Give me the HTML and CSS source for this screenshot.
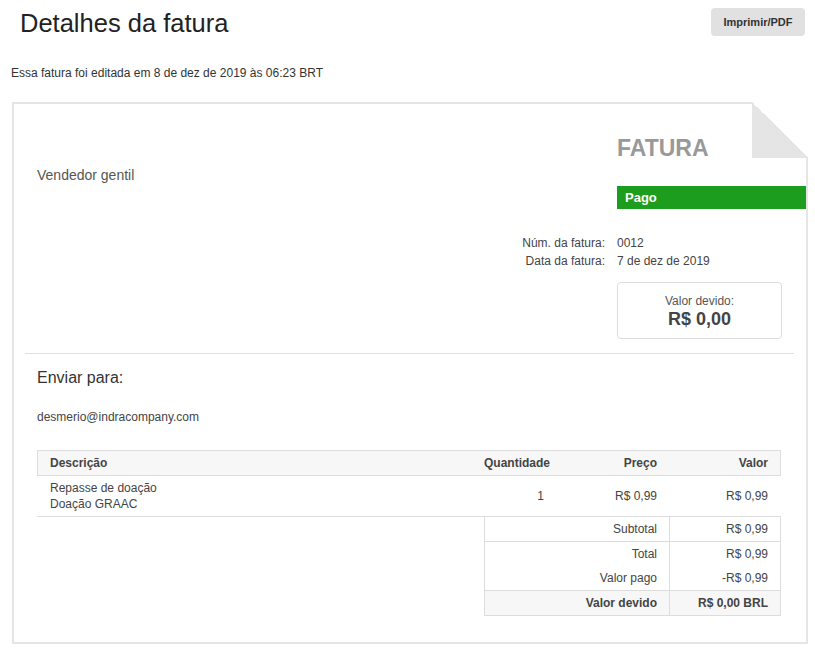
FILE: index.html
```html
<!DOCTYPE html>
<html lang="pt-BR">
<head>
<meta charset="utf-8">
<title>Detalhes da fatura</title>
<link rel="stylesheet" href="styles.css">
</head>
<body>
<div class="page">
  <header class="top">
    <h1 class="title">Detalhes da fatura</h1>
    <button class="print-btn" type="button">Imprimir/PDF</button>
  </header>
  <p class="edited">Essa fatura foi editada em 8 de dez de 2019 às 06:23 BRT</p>

  <div class="invoice">
    <div class="head-grid">
      <div class="seller">Vendedor gentil</div>
      <div class="doc-title">FATURA</div>
      <div class="status">Pago</div>
      <div class="meta-label r3">Núm. da fatura:</div>
      <div class="meta-value r3">0012</div>
      <div class="meta-label r4">Data da fatura:</div>
      <div class="meta-value r4">7 de dez de 2019</div>
      <div class="due-box">
        <div class="due-label">Valor devido:</div>
        <div class="due-amount">R$ 0,00</div>
      </div>
    </div>

    <hr class="divider">

    <div class="body">
      <h2 class="ship-title">Enviar para:</h2>
      <p class="email">desmerio@indracompany.com</p>

      <div class="items">
        <div class="row row-head">
          <div class="c-desc">Descrição</div>
          <div class="c-num">Quantidade</div>
          <div class="c-num">Preço</div>
          <div class="c-num">Valor</div>
        </div>
        <div class="row row-item">
          <div class="c-desc">Repasse de doação<br>Doação GRAAC</div>
          <div class="c-num c-qty">1</div>
          <div class="c-num">R$ 0,99</div>
          <div class="c-num">R$ 0,99</div>
        </div>
      </div>

      <div class="totals">
        <div class="t-label sep">Subtotal</div>
        <div class="t-value sep">R$ 0,99</div>
        <div class="t-label">Total</div>
        <div class="t-value">R$ 0,99</div>
        <div class="t-label sep">Valor pago</div>
        <div class="t-value sep">-R$ 0,99</div>
        <div class="t-label strong">Valor devido</div>
        <div class="t-value strong">R$ 0,00 BRL</div>
      </div>
    </div>
  </div>
</div>
</body>
</html>
```

FILE: styles.css
```css
* {
  box-sizing: border-box;
}

html, body {
  margin: 0;
  padding: 0;
  background: #fff;
}

body {
  font-family: "Liberation Sans", Arial, sans-serif;
  color: #333;
  font-size: 12px;
}

.page {
  padding-top: 8px;
}

.top {
  display: flex;
  justify-content: space-between;
  align-items: flex-start;
  padding: 0 10px 0 20px;
}

.title {
  margin: 0;
  font-size: 25.5px;
  line-height: 30px;
  font-weight: normal;
  color: #222;
}

.print-btn {
  width: 94px;
  height: 28px;
  border: none;
  border-radius: 4px;
  background: #e1e1e1;
  color: #333;
  font-family: inherit;
  font-size: 11px;
  font-weight: bold;
  padding: 0;
}

.edited {
  margin: 27px 0 0 11px;
  font-size: 12px;
  line-height: 16px;
  color: #333;
}

.invoice {
  position: relative;
  margin: 21px 0 0 12px;
  width: 796px;
  border: 2px solid #e5e5e5;
  padding: 30px 0 26px;
}

.invoice::before {
  content: "";
  position: absolute;
  top: -2px;
  right: -2px;
  width: 56px;
  height: 56px;
  background: linear-gradient(to bottom left, #fff 50%, #e5e5e5 50%);
}

.head-grid {
  display: grid;
  grid-template-columns: 1fr auto 189px;
  column-gap: 12px;
  padding-left: 23px;
}

.seller {
  grid-column: 1;
  grid-row: 1 / span 2;
  margin-top: 31px;
  font-size: 14px;
  line-height: 20px;
  color: #555;
}

.doc-title {
  grid-column: 3;
  grid-row: 1;
  font-size: 23px;
  line-height: 28px;
  font-weight: bold;
  color: #999;
}

.status {
  grid-column: 3;
  grid-row: 2;
  margin: 24px 0 25px;
  height: 23px;
  line-height: 23px;
  padding-left: 8px;
  background: #1d9d1d;
  color: #fff;
  font-size: 13px;
  font-weight: bold;
}

.meta-label {
  grid-column: 2;
  text-align: right;
  line-height: 18px;
  color: #444;
}

.meta-value {
  grid-column: 3;
  line-height: 18px;
  color: #444;
}

.r3 {
  grid-row: 3;
}

.r4 {
  grid-row: 4;
}

.due-box {
  grid-column: 3;
  grid-row: 5;
  margin-top: 12px;
  width: 165px;
  border: 1px solid #ddd;
  border-radius: 4px;
  padding: 12px 0 11px;
  text-align: center;
}

.due-label {
  font-size: 12px;
  line-height: 13px;
  color: #555;
}

.due-amount {
  margin-top: 3px;
  font-size: 18px;
  line-height: 16px;
  font-weight: bold;
  color: #444;
}

.divider {
  margin: 14px 12px 0 11px;
  border: 0;
  border-top: 1px solid #e0e0e0;
  height: 0;
}

.body {
  padding: 0 25px 0 23px;
}

.ship-title {
  margin: 14px 0 0;
  font-size: 16px;
  line-height: 20px;
  font-weight: normal;
  color: #333;
}

.email {
  margin: 21px 0 0;
  line-height: 16px;
  color: #444;
}

.items {
  margin-top: 25px;
}

.row {
  display: grid;
  grid-template-columns: 1fr 90px 107px 111px;
  line-height: 16px;
  color: #444;
}

.row > div {
  padding: 4px 12px;
}

.row-head {
  border: 1px solid #ddd;
  background: #f7f7f7;
  font-weight: bold;
}

.row-item {
  border-bottom: 1px solid #ddd;
  padding: 0 1px;
}

.row-item .c-num {
  display: flex;
  align-items: center;
  justify-content: flex-end;
}

.c-num {
  text-align: right;
}

.row-item .c-qty {
  padding-right: 18px;
}

.totals {
  margin-left: auto;
  width: 297px;
  border: 1px solid #ddd;
  border-top: 0;
  display: grid;
  grid-template-columns: 184px 1fr;
  line-height: 16px;
  color: #444;
}

.t-label,
.t-value {
  padding: 4px 12px;
  text-align: right;
}

.t-value {
  border-left: 1px solid #ddd;
}

.sep {
  border-bottom: 1px solid #ddd;
}

.strong {
  background: #f7f7f7;
  font-weight: bold;
}
```
